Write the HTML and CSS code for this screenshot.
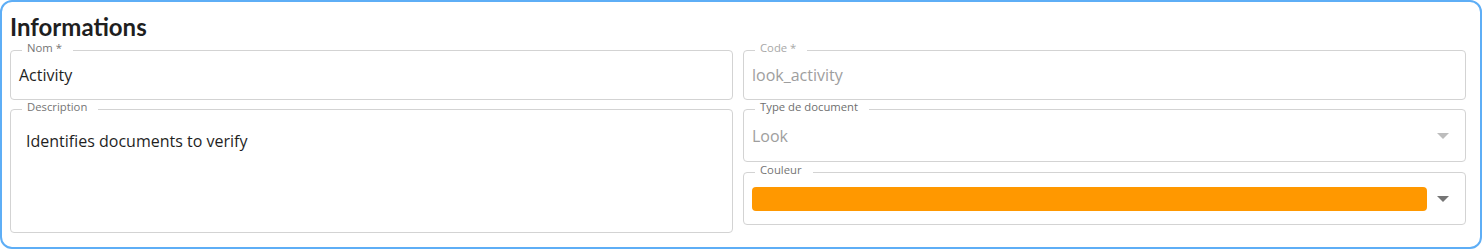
FILE: index.html
```html
<!DOCTYPE html>
<html lang="fr">
<head>
<meta charset="utf-8">
<title>Informations</title>
<link rel="stylesheet" href="styles.css">
</head>
<body>
<section class="card">
  <h2 class="title">Informations</h2>
  <div class="grid">
    <div class="col">
      <div class="field field-input">
        <span class="label">Nom *</span>
        <span class="value">Activity</span>
      </div>
      <div class="field field-area">
        <span class="label">Description</span>
        <span class="value">Identifies documents to verify</span>
      </div>
    </div>
    <div class="col col-right">
      <div class="field field-input disabled">
        <span class="label">Code *</span>
        <span class="value">look_activity</span>
      </div>
      <div class="field field-select disabled">
        <span class="label label-dark">Type de document</span>
        <span class="value grow">Look</span>
        <span class="arrow"></span>
      </div>
      <div class="field field-select field-color">
        <span class="label">Couleur</span>
        <span class="swatch"></span>
        <span class="arrow"></span>
      </div>
    </div>
  </div>
</section>
</body>
</html>
```

FILE: styles.css
```css
html, body {
  margin: 0;
  padding: 0;
  background: #ffffff;
}

.card {
  box-sizing: border-box;
  height: 249px;
  border: 2px solid #5eaef6;
  border-radius: 12px;
  padding: 0 14px 0 8px;
  font-family: "Open Sans", "Noto Sans", sans-serif;
}

.title {
  margin: 0;
  padding-top: 10px;
  font-family: Lato, "Open Sans", sans-serif;
  font-weight: 700;
  font-size: 24px;
  line-height: 29px;
  color: #1f1f1f;
}

.grid {
  display: grid;
  grid-template-columns: 1fr 1fr;
  column-gap: 10px;
  margin-top: 9px;
}

.col {
  display: flex;
  flex-direction: column;
  gap: 9px;
}

.field {
  position: relative;
  box-sizing: border-box;
  border: 1px solid #d3d3d3;
  border-radius: 4px;
  display: flex;
  align-items: center;
}

.label {
  position: absolute;
  top: -10px;
  left: 11px;
  padding: 0 11px 0 5px;
  background: #ffffff;
  font-size: 11.3px;
  line-height: 14px;
  color: #757575;
  white-space: nowrap;
}

.value {
  font-size: 16px;
  line-height: 24px;
  color: #1f1f1f;
}

.grow {
  flex: 1;
}

.field-input {
  height: 50px;
  padding-left: 8px;
}

.field-area {
  height: 124px;
  align-items: flex-start;
  padding: 19px 15px 0 15px;
}

.field-select {
  height: 53px;
  padding: 0 16px 0 8px;
}

.field-color {
  margin-top: 1px;
}

.disabled .label {
  color: #a8a8a8;
}

.disabled .label-dark {
  color: #6f6f6f;
}

.disabled .value {
  color: #9e9e9e;
}

.swatch {
  flex: 1;
  height: 24px;
  margin-top: 1px;
  border-radius: 4px;
  background: #ff9800;
}

.arrow {
  width: 0;
  height: 0;
  margin-left: 10px;
  border-left: 6px solid transparent;
  border-right: 6px solid transparent;
  border-top: 6px solid #757575;
}

.disabled .arrow {
  border-top-color: #bdbdbd;
}
```
